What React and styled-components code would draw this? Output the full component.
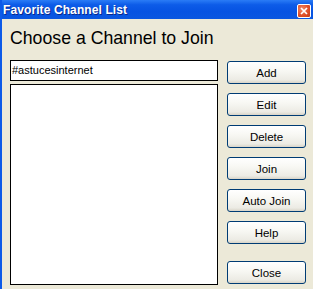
import React from "react";
import styled, { createGlobalStyle } from "styled-components";

const Global = createGlobalStyle`
  html, body { margin: 0; padding: 0; background: #ece9d8; }
  body { width: 313px; height: 289px; overflow: hidden; }
`;

const Window = styled.div`
  width: 313px;
  height: 289px;
  display: flex;
  flex-direction: column;
  background: #ece9d8;
  box-sizing: border-box;
  border-left: 2px solid #0c5ae8;
  overflow: hidden;
`;

const TitleBar = styled.div`
  height: 19px;
  flex: none;
  display: flex;
  align-items: center;
  justify-content: space-between;
  padding: 0 2px 0 3px;
  margin-left: -2px;
  background: linear-gradient(to bottom, #2a7cf6 0%, #0d5ce8 25%, #0653e2 60%, #0a57e0 100%);
`;

const Title = styled.span`
  font-family: "Liberation Sans", Arial, sans-serif;
  font-weight: bold;
  font-size: 12px;
  color: #fff;
  text-shadow: 1px 1px 0 #0a2a8a;
  letter-spacing: 0.1px;
`;

const CloseBox = styled.div`
  width: 14px;
  height: 14px;
  box-sizing: border-box;
  border: 1px solid #fff;
  border-radius: 2px;
  background: radial-gradient(circle at 35% 35%, #f08a6a 0%, #e0502a 55%, #c33a15 100%);
  display: flex;
  align-items: center;
  justify-content: center;
  margin-top: 2px;
`;

const Body = styled.div`
  flex: 1;
  display: flex;
  flex-direction: column;
  padding: 9px 7px 4px 8px;
`;

const Heading = styled.h1`
  margin: 0;
  font-family: "Liberation Sans", Arial, sans-serif;
  font-weight: normal;
  font-size: 17.7px;
  line-height: 20px;
  color: #000;
`;

const Main = styled.div`
  flex: 1;
  display: flex;
  gap: 9px;
  margin-top: 12px;
`;

const LeftCol = styled.div`
  width: 208px;
  display: flex;
  flex-direction: column;
  gap: 3px;
`;

const TextInput = styled.div`
  height: 21px;
  box-sizing: border-box;
  border: 1px solid #000;
  background: #fff;
  font-family: "Liberation Sans", Arial, sans-serif;
  font-size: 11px;
  line-height: 19px;
  padding-left: 1px;
  color: #000;
`;

const ListBox = styled.div`
  flex: 1;
  box-sizing: border-box;
  border: 1px solid #000;
  background: #fff;
`;

const RightCol = styled.div`
  width: 79px;
  display: flex;
  flex-direction: column;
  gap: 9px;
  padding-top: 1px;
`;

const Button = styled.div`
  height: 23px;
  box-sizing: border-box;
  border: 1px solid #003c74;
  border-radius: 3px;
  background: linear-gradient(to bottom, #ffffff 0%, #f8f8f4 40%, #ecebe4 85%, #d8d4c8 100%);
  display: flex;
  align-items: center;
  justify-content: center;
  font-family: "Liberation Sans", Arial, sans-serif;
  font-size: 11.5px;
  color: #000;
  margin-top: ${(p) => (p.$extra ? `${p.$extra}px` : "0")};
`;

const buttons = ["Add", "Edit", "Delete", "Join", "Auto Join", "Help"];

export default function App() {
  return (
    <>
      <Global />
      <Window>
        <TitleBar>
          <Title>Favorite Channel List</Title>
          <CloseBox>
            <svg width="8" height="8" viewBox="0 0 8 8">
              <path d="M1 1 L7 7 M7 1 L1 7" stroke="#fff" strokeWidth="1.7" />
            </svg>
          </CloseBox>
        </TitleBar>
        <Body>
          <Heading>Choose a Channel to Join</Heading>
          <Main>
            <LeftCol>
              <TextInput>#astucesinternet</TextInput>
              <ListBox />
            </LeftCol>
            <RightCol>
              {buttons.map((b) => (
                <Button key={b}>{b}</Button>
              ))}
              <Button $extra={8}>Close</Button>
            </RightCol>
          </Main>
        </Body>
      </Window>
    </>
  );
}
